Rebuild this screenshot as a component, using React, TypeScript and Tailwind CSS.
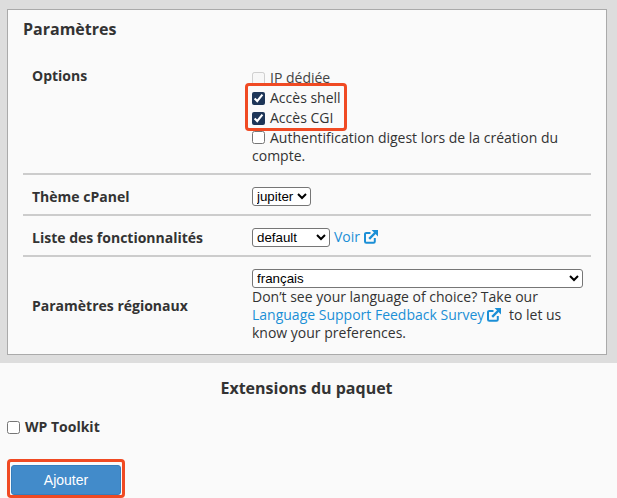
const ExternalIcon = ({ className }: { className: string }) => (
  <svg viewBox="0 0 14 14" className={className} fill="none" stroke="currentColor">
    <path d="M10.8 8v3.4a1.3 1.3 0 0 1-1.3 1.3H2.3A1.3 1.3 0 0 1 1 11.4V4.2a1.3 1.3 0 0 1 1.3-1.3H6.5" strokeWidth="2" />
    <path d="M5.2 8.8 12 2" strokeWidth="2.4" />
    <path d="M7.6 0H14V6.4z" fill="currentColor" stroke="none" />
  </svg>
);

const Row = ({ label, labelPad, children, center, last }: { label: string; labelPad: string; children: React.ReactNode; center?: boolean; last?: boolean }) => (
  <div className={`flex ${center ? "items-center" : ""} ${last ? "" : "border-b-[2px] border-[#cccccc]"}`}>
    <div className={`w-[229px] pl-[9px] font-bold ${labelPad}`}>{label}</div>
    <div className="flex-1">{children}</div>
  </div>
);

export default function App() {
  return (
    <div className="relative h-[498px] w-[617px] overflow-hidden bg-[#fafafa] font-['Open_Sans',sans-serif] text-[14px] leading-[20px] text-[#333333]">
      <div className="bg-[#dddddd] pb-[8px] pl-[7px] pr-[10px] pt-[9px]">
        <div className="h-[346px] border border-[#aaaaaa] bg-[#fafafa] pl-[15px] pr-[15px]">
          <h2 className="pb-[23px] pt-[8px] text-[16px] font-bold leading-[22px]">Paramètres</h2>

          <Row label="Options" labelPad="pt-[3px]">
            <div className="pb-[8px] pt-[5px] leading-[20px]">
              <label className="flex items-center gap-[5px] text-[#444444]">
                <input type="checkbox" disabled className="m-0 h-[13px] w-[13px]" />
                IP dédiée
              </label>
              <label className="flex items-center gap-[5px]">
                <input type="checkbox" defaultChecked className="m-0 h-[13px] w-[13px] accent-[#1d3557]" />
                Accès shell
              </label>
              <label className="flex items-center gap-[5px]">
                <input type="checkbox" defaultChecked className="m-0 h-[13px] w-[13px] accent-[#1d3557]" />
                Accès CGI
              </label>
              <label className="mt-[1px] block leading-[18px]">
                <input type="checkbox" className="m-0 mr-[5px] h-[13px] w-[13px] align-[-1px]" />
                Authentification digest lors de la création du compte.
              </label>
            </div>
          </Row>

          <Row label="Thème cPanel" labelPad="pt-[5px]" center>
            <div className="flex h-[39px] items-center pt-[3px]">
              <select className="h-[19px] w-[59px] rounded-[3px] border border-[#767676] bg-white font-['Liberation_Sans',sans-serif] text-[13.33px] leading-none text-black">
                <option>jupiter</option>
              </select>
            </div>
          </Row>

          <Row label="Liste des fonctionnalités" labelPad="pt-[5px]" center>
            <div className="flex h-[39px] items-center gap-[4px] pt-[3px]">
              <select className="h-[19px] w-[78px] rounded-[3px] border border-[#767676] bg-white font-['Liberation_Sans',sans-serif] text-[13.33px] leading-none text-black">
                <option>default</option>
              </select>
              <a className="flex items-center gap-[4px] text-[#1b8fd6]">
                Voir
                <ExternalIcon className="h-[14px] w-[14px]" />
              </a>
            </div>
          </Row>

          <Row label="Paramètres régionaux" labelPad="pt-[1px]" center last>
            <div className="pb-[12px] pr-[8px] pt-[12px] leading-[18px]">
              <select className="block h-[19px] w-[331px] rounded-[3px] border border-[#767676] bg-white font-['Liberation_Sans',sans-serif] text-[13.33px] leading-none text-black">
                <option>français</option>
              </select>
              <p>
                Don’t see your language of choice? Take our{" "}
                <a className="text-[#1b8fd6]">
                  Language Support Feedback Survey
                  <ExternalIcon className="ml-[3px] mr-[4px] inline h-[14px] w-[14px] align-[-2px]" />
                </a>{" "}
                to let us know your preferences.
              </p>
            </div>
          </Row>
        </div>
      </div>

      <h3 className="pr-[4px] pt-[14px] text-center text-[16px] font-bold leading-[22px]">Extensions du paquet</h3>

      <label className="mt-[18px] flex items-center gap-[5px] pl-[7px] font-bold">
        <input type="checkbox" className="m-0 h-[13px] w-[13px]" />
        WP Toolkit
      </label>

      <div className="ml-[7px] mt-[22px] h-[39px] w-[118px] rounded-[4px] border-[3px] border-[#f04a23] pl-[1px] pt-[3px]">
        <button className="block h-[30px] w-[110px] rounded-[3px] border border-[#357ebd] bg-[#428bca] font-['Liberation_Sans',sans-serif] text-[14px] text-white">
          Ajouter
        </button>
      </div>

      <div className="absolute left-[245px] top-[83px] h-[48px] w-[102px] rounded-[4px] border-[3px] border-[#f04a23]" />
    </div>
  );
}
